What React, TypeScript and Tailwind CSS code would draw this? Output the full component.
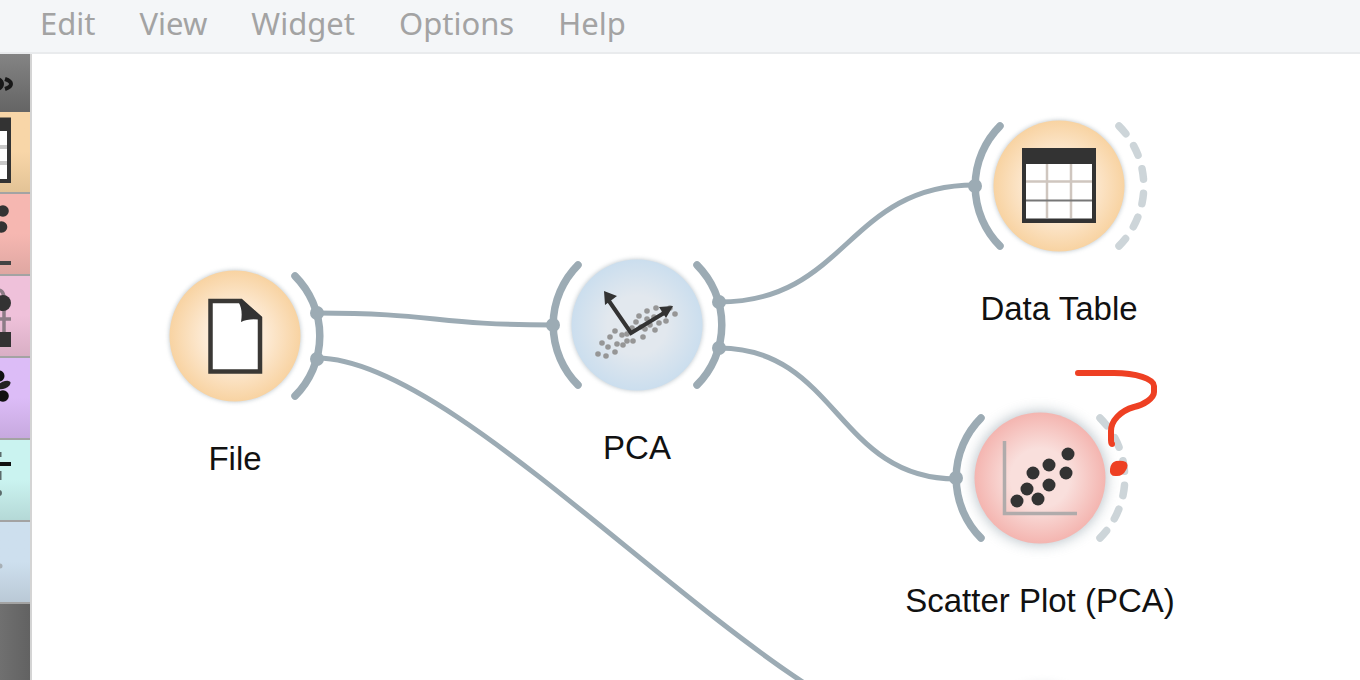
import type { ReactNode } from "react";

const MENUS = ["Edit", "View", "Widget", "Options", "Help"];

const LINKS = [
  "M285 259 C403 259 403 271 521 271",
  "M687 248 C815 248 815 131 943 131",
  "M687 294 C805 294 805 425 924 425",
  "M285 304 C442 304 755 690 920 690",
];

type Category = { name: string; tone: string; icon: ReactNode };

const CATEGORIES: Category[] = [
  {
    name: "Data",
    tone: "from-[#f8d6a8] via-[#f8d6a8] to-[#e3c396]",
    icon: (
      <>
        <rect x="-50" y="5.5" width="61" height="65.5" fill="#333" />
        <rect x="-46" y="19" width="53" height="48" fill="#fff" />
        <path d="M-46 35H7M-46 51H7" stroke="#c8c8c8" strokeWidth="4" />
      </>
    ),
  },
  {
    name: "Visualize",
    tone: "from-[#f6b7b1] via-[#f6b7b1] to-[#dfa7a2]",
    icon: (
      <>
        <circle cx="3" cy="17" r="5.8" fill="#333" />
        <circle cx="1.5" cy="33" r="5.8" fill="#333" />
        <path d="M-40 69H11" stroke="#444" strokeWidth="4" />
      </>
    ),
  },
  {
    name: "Model",
    tone: "from-[#efc1da] via-[#efc1da] to-[#d9afc5]",
    icon: (
      <>
        <path d="M-4 14Q4 13 4 23M4 30V56M-4 43H11" fill="none" stroke="#8c7c86" strokeWidth="3.5" />
        <circle cx="3" cy="27" r="8" fill="#333" />
        <rect x="-4" y="56" width="15" height="15" fill="#333" />
      </>
    ),
  },
  {
    name: "Evaluate",
    tone: "from-[#dcbcf7] via-[#dcbcf7] to-[#c7a9df]",
    icon: (
      <>
        <circle cx="-1" cy="18" r="5.5" fill="#111" />
        <ellipse cx="4" cy="27" rx="7" ry="3.5" transform="rotate(-25 4 27)" fill="#222" />
        <circle cx="3" cy="38" r="5.8" fill="#111" />
      </>
    ),
  },
  {
    name: "Unsupervised",
    tone: "from-[#caf3f0] via-[#caf3f0] to-[#b5d9d7]",
    icon: (
      <>
        <path d="M-10 24H11" stroke="#111" strokeWidth="4" />
        <path d="M0 12V17M0 31V40" fill="none" stroke="#5b6b6b" strokeWidth="3" />
        <circle cx="-1" cy="53" r="3" fill="#5b6b6b" />
      </>
    ),
  },
  {
    name: "Transform",
    tone: "from-[#cddfee] via-[#cddfee] to-[#bac9d6]",
    icon: <circle cx="0" cy="44" r="2.5" fill="#a8b0b6" />,
  },
];

const CLOUD = [
  [-39, 29], [-31, 31], [-35, 18], [-29, 22], [-22, 27], [-27, 12], [-20, 19], [-22, 6], [-15, 10], [-14, 20],
  [-10, 16], [-4, 16], [-10, 9], [-5, 3], [-1, -3], [2, -9], [6, 12], [4, 2], [10, -14], [10, -6],
  [8, 4], [13, 0], [18, 5], [19, -17], [17, -8], [22, -2], [29, -4], [27, -12], [33, -17], [38, -11],
];

const DOTS = [
  [-23, 23], [-13, 11], [-2, 21], [-7, -5], [9, 7], [9, -13], [26, -5], [28, -24],
];

const FileIcon = (
  <>
    <path d="M-24.5 -35H6L25 -18V35.5H-24.5Z" fill="#fff" stroke="#3a3835" strokeWidth="4.5" />
    <path d="M6 -37L27 -19V-16Q14 -18 6 -14Q8 -26 4 -33Z" fill="#333" />
  </>
);

const AxesIcon = (
  <>
    <g fill="#969696">
      {CLOUD.map(([x, y], i) => (
        <circle key={i} cx={x} cy={y} r="2.8" />
      ))}
    </g>
    <path d="M-28 -24L-6 8L27 -12" fill="none" stroke="#333" strokeWidth="4" />
    <path d="M-33 -34L-20 -29L-32 -20Z M36 -19L22 -18L29 -7Z" fill="#333" />
  </>
);

const TableIcon = (
  <>
    <rect x="-37" y="-38" width="74" height="75" fill="#333" />
    <rect x="-33" y="-22" width="66" height="54.5" fill="#fff" />
    <path d="M-12 -22V32M12 -22V32M-33 -4.5H33" stroke="#cfc6bf" strokeWidth="2.5" />
    <path d="M-33 14.5H33" stroke="#777" strokeWidth="2" />
  </>
);

const ScatterIcon = (
  <>
    <path d="M-35.5 -37V35.5H37" fill="none" stroke="#b0abab" strokeWidth="3.5" />
    <g fill="#333">
      {DOTS.map(([x, y], i) => (
        <circle key={i} cx={x} cy={y} r="6.5" />
      ))}
    </g>
  </>
);

type WidgetNode = {
  id: string;
  label: string;
  place: string;
  inner: string;
  outer: string;
  input?: boolean;
  output: "linked" | "empty";
  selected?: boolean;
  icon: ReactNode;
};

const NODES: WidgetNode[] = [
  { id: "file", label: "File", place: "left-[203px] top-[282px]", inner: "#fdebd6", outer: "#f8d3a2", output: "linked", icon: FileIcon },
  { id: "pca", label: "PCA", place: "left-[605px] top-[271px]", inner: "#e2e8ee", outer: "#cbdeee", input: true, output: "linked", icon: AxesIcon },
  { id: "table", label: "Data Table", place: "left-[1027px] top-[132px]", inner: "#fdebd6", outer: "#f8d3a2", input: true, output: "empty", icon: TableIcon },
  { id: "scatter", label: "Scatter Plot (PCA)", place: "left-[1008px] top-[424px]", inner: "#f9dfdc", outer: "#f4b5b0", input: true, output: "empty", selected: true, icon: ScatterIcon },
];

function Widget({ node }: { node: WidgetNode }) {
  return (
    <figure className={`absolute flex w-[300px] -translate-x-1/2 flex-col items-center gap-[3px] ${node.place}`}>
      <svg viewBox="-100 -100 200 200" className="-mt-[100px] size-[200px] overflow-visible" aria-hidden="true">
        <defs>
          <radialGradient id={`fill-${node.id}`}>
            <stop offset="0" stopColor={node.inner} />
            <stop offset="0.45" stopColor={node.inner} />
            <stop offset="1" stopColor={node.outer} />
          </radialGradient>
          <filter id={`shade-${node.id}`} x="-30%" y="-30%" width="160%" height="160%">
            <feGaussianBlur stdDeviation={node.selected ? 7 : 2} />
          </filter>
        </defs>
        <circle r="66" fill="#8c9ba5" opacity={node.selected ? 0.65 : 0.5} filter={`url(#shade-${node.id})`} />
        <circle r="65.5" fill={`url(#fill-${node.id})`} />
        {node.icon}
        <g fill="none" stroke="#9cabb4" strokeWidth="7.5" strokeLinecap="round">
          {node.input && <path d="M-59 -60A85 85 0 0 0 -59 60" />}
          {node.output === "linked" && <path d="M60 -60A85 85 0 0 1 60 60" />}
          {node.output === "empty" && (
            <path d="M60 -60A85 85 0 0 1 60 60" stroke="#cdd5d9" strokeDasharray="10.5 14.1" />
          )}
        </g>
        <g fill="#9cabb4">
          {node.input && <circle cx="-84" r="7" />}
          {node.output === "linked" && (
            <>
              <circle cx="82" cy="-23" r="7" />
              <circle cx="82" cy="23" r="7" />
            </>
          )}
        </g>
      </svg>
      <figcaption className="whitespace-nowrap text-[33px] leading-10 text-[#111]">{node.label}</figcaption>
    </figure>
  );
}

export default function App() {
  return (
    <div className="flex h-screen flex-col overflow-hidden bg-white font-['Liberation_Sans',Arial,sans-serif]">
      <nav
        aria-label="Main menu"
        className="flex h-[54px] shrink-0 items-center gap-11 border-b-2 border-[#e9ebed] bg-[#f4f6f8] pb-1.5 pl-10 font-['Noto_Sans','Open_Sans',sans-serif]"
      >
        {MENUS.map((menu) => (
          <button key={menu} type="button" className="text-[31px] leading-10 text-[#a3a3a3]">
            {menu}
          </button>
        ))}
      </nav>
      <div className="flex min-h-0 flex-1">
        <aside className="flex w-8 shrink-0 flex-col border-r-2 border-[#d4d4d4] bg-linear-to-r from-[#707070] to-[#626262]">
          <button
            type="button"
            aria-label="Expand toolbox"
            className="h-[58px] shrink-0 border-b border-[#666] bg-linear-to-b from-[#848484] to-[#656565]"
          >
            <svg viewBox="0 0 30 57" className="h-[57px] w-[30px]" aria-hidden="true">
              <path
                d="M-3 25H-2Q2 27 2 30Q2 33 -2 35H-3M5 25Q11 27 11 30Q11 33 5 35"
                fill="none"
                stroke="#181818"
                strokeWidth="4"
              />
            </svg>
          </button>
          {CATEGORIES.map((category) => (
            <button
              key={category.name}
              type="button"
              aria-label={category.name}
              className={`h-[82px] shrink-0 border-b-2 border-[#a3a3a3] bg-linear-to-b ${category.tone}`}
            >
              <svg viewBox="0 0 30 80" className="h-20 w-[30px]" aria-hidden="true">
                {category.icon}
              </svg>
            </button>
          ))}
        </aside>
        <main className="relative min-w-0 flex-1 overflow-hidden bg-white">
          <svg className="absolute inset-0 size-full" aria-hidden="true">
            <circle cx="1010" cy="696" r="70" fill="#8c9ba5" opacity="0.1" className="blur-[3px]" />
            <g fill="none" stroke="#9cabb4" strokeWidth="5">
              {LINKS.map((d) => (
                <path key={d} d={d} />
              ))}
            </g>
          </svg>
          {NODES.map((node) => (
            <Widget key={node.id} node={node} />
          ))}
          <svg className="absolute inset-0 size-full" aria-hidden="true">
            <path
              d="M1046 319H1082C1104 319 1122 325 1122 332V338C1122 344 1112 351 1102 353C1088 357 1079 367 1079 377V386Q1079 390 1080 390"
              fill="none"
              stroke="#ee4023"
              strokeWidth="6"
              strokeLinecap="round"
              strokeLinejoin="round"
            />
            <path d="M1084 407Q1090 406 1094 408Q1097 411 1094 416Q1091 422 1085 422Q1077 423 1078 415Q1079 408 1084 407Z" fill="#ee4023" />
          </svg>
        </main>
      </div>
    </div>
  );
}
